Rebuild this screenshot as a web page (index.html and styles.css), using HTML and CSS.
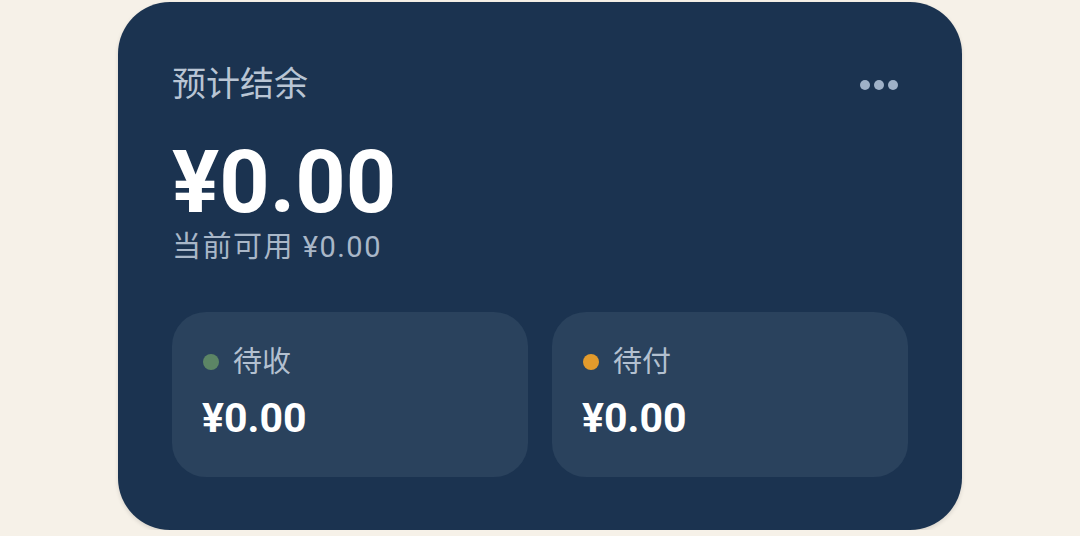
FILE: index.html
```html
<!DOCTYPE html>
<html lang="zh">
<head>
    <meta charset="UTF-8">
    <meta name="viewport" content="width=device-width, initial-scale=1.0">
    <title>预计结余</title>
    <link rel="stylesheet" href="styles.css">
</head>
<body>

    <div class="balance-card">
        <div class="card-head">
            <h2 class="card-title">预计结余</h2>
            <div class="more-btn">
                <span></span><span></span><span></span>
            </div>
        </div>

        <div class="total">¥0.00</div>
        <div class="available">当前可用 ¥0.00</div>

        <div class="sub-cards">
            <div class="sub-card">
                <div class="sub-label"><i class="dot dot-in"></i>待收</div>
                <div class="sub-amount">¥0.00</div>
            </div>
            <div class="sub-card">
                <div class="sub-label"><i class="dot dot-out"></i>待付</div>
                <div class="sub-amount">¥0.00</div>
            </div>
        </div>
    </div>

</body>
</html>
```

FILE: styles.css
```css
* {
    margin: 0;
    padding: 0;
    box-sizing: border-box;
    font-family: 'Roboto', 'Noto Sans CJK SC', sans-serif;
}

body {
    background-color: #f6f1e8;
    overflow: hidden;
}

/* kartu utama */
.balance-card {
    width: 844px;
    height: 528px;
    margin: 2px 0 0 118px;
    padding: 60px 54px 53px;
    background: #1b3350;
    border-radius: 52px;
    box-shadow: 0 2px 4px rgba(0, 0, 0, 0.12);
    display: flex;
    flex-direction: column;
}

.card-head {
    display: flex;
    justify-content: space-between;
    align-items: center;
}

.card-title {
    font-size: 34px;
    font-weight: 400;
    line-height: 44px;
    color: #b9c5d4;
}

.more-btn {
    display: flex;
    gap: 4px;
    margin: 2px 10px 0 0;
}

.more-btn span {
    width: 10px;
    height: 10px;
    border-radius: 50%;
    background: #9fb1c7;
}

.total {
    margin-top: 32px;
    font-size: 88px;
    font-weight: 700;
    line-height: 88px;
    color: #ffffff;
}

.available {
    margin-top: 3px;
    font-size: 29px;
    line-height: 36px;
    letter-spacing: 1.5px;
    color: #a9b7c8;
}

/* kartu kecil */
.sub-cards {
    display: grid;
    grid-template-columns: 1fr 1fr;
    gap: 24px;
    margin-top: auto;
}

.sub-card {
    height: 165px;
    padding: 32px 30px 0;
    background: #2a425d;
    border-radius: 34px;
}

.sub-label {
    display: flex;
    align-items: center;
    gap: 14px;
    font-size: 29px;
    line-height: 36px;
    color: #b3c0d0;
}

.dot {
    width: 16px;
    height: 16px;
    border-radius: 50%;
    margin-left: 1px;
}

.dot-in { background: #5c8565; }
.dot-out { background: #e39b2c; }

.sub-amount {
    margin-top: 14px;
    font-size: 41px;
    font-weight: 700;
    line-height: 48px;
    color: #ffffff;
}
```
